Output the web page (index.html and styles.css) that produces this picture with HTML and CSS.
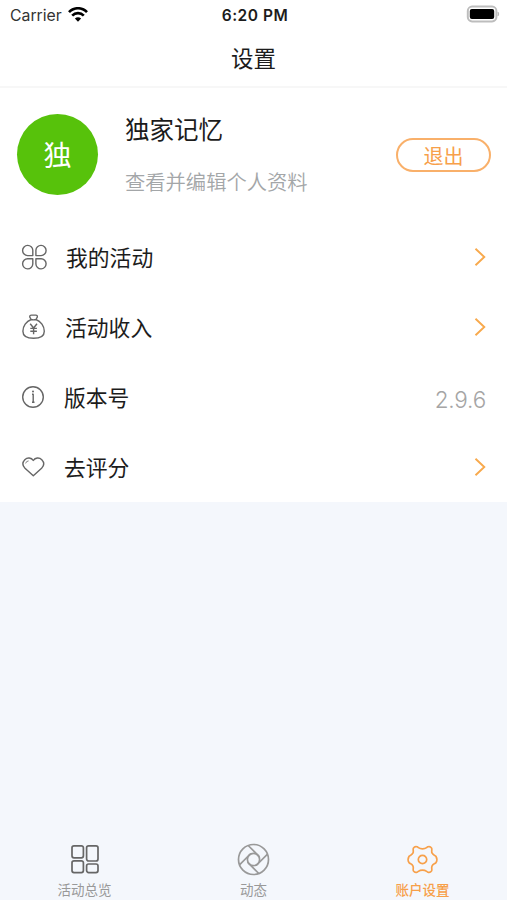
FILE: index.html
```html
<!DOCTYPE html>
<html lang="zh-CN">
<head>
<meta charset="utf-8">
<title>设置</title>
<link rel="stylesheet" href="styles.css">
</head>
<body>
<div class="app">
  <header class="status">
    <div class="carrier">
      <span>Carrier</span>
      <svg class="wifi" width="20" height="15" viewBox="0 0 20 15"><g fill="none" stroke="#000" stroke-width="2.6"><path d="M1 5.2C6-.1 14-.1 19 5.2"/><path d="M4.2 8.7C7.4 5.3 12.6 5.3 15.8 8.7"/></g><path d="M6.9 11.4C8.7 9.7 11.3 9.7 13.1 11.4L10 14.7Z"/></svg>
    </div>
    <span class="time">6:20 PM</span>
    <svg class="battery" width="34" height="18" viewBox="0 0 34 18"><rect x="1.8" y="1.6" width="28.6" height="14.8" rx="4.3" fill="#fff" stroke="#bdbdbd" stroke-width="2"/><rect x="3.8" y="4" width="24.4" height="10" rx="2"/><path d="M32 7q1.6 2 0 4z" fill="#aaa" stroke="#aaa" stroke-width=".5"/></svg>
  </header>
  <h1 class="title">设置</h1>
  <main class="panel">
    <section class="profile">
      <div class="avatar">独</div>
      <div class="who">
        <div class="name">独家记忆</div>
        <div class="hint">查看并编辑个人资料</div>
      </div>
      <button class="logout">退出</button>
    </section>
    <div class="row">
      <svg class="icon" width="28" height="28" viewBox="0 0 28 28"><path d="M12.8 12.6H7.6A5.1 5.1 0 1 1 12.8 7.3ZM15.9 12.6V7.3A5.1 5.1 0 1 1 21.1 12.6ZM12.8 15.7V21A5.1 5.1 0 1 1 7.6 15.7ZM15.9 15.7H21.1A5.1 5.1 0 1 1 15.9 21Z"/></svg>
      <span class="label label-wide">我的活动</span>
      <svg class="arrow" width="12" height="20" viewBox="0 0 12 20"><path d="M1.5 1.7 10.3 10 1.5 18.3"/></svg>
    </div>
    <div class="row">
      <svg class="icon" width="28" height="28" viewBox="0 0 28 28"><path d="M11.2 6.5 9.8 4.2Q9.4 2.1 11.5 2.1H15.8Q17.7 2.1 17.3 4.2L15.9 6.5Q13.5 7.2 11.2 6.5C6.2 8.2 2.9 13.2 2.9 18.2C2.9 23.3 6 25.3 13.6 25.3S24.3 23.3 24.3 18.2C24.3 13.2 20.9 8.2 15.9 6.5"/><path d="M10.2 10.8 13.6 15 17 10.8M13.6 15V21.2M10.3 15.4H16.9M10.3 18.2H16.9"/></svg>
      <span class="label label-mid">活动收入</span>
      <svg class="arrow" width="12" height="20" viewBox="0 0 12 20"><path d="M1.5 1.7 10.3 10 1.5 18.3"/></svg>
    </div>
    <div class="row">
      <svg class="icon" width="28" height="28" viewBox="0 0 28 28"><circle cx="13" cy="14" r="10.3"/><path d="M12 11.3H13.2V19.3M12 19.3H14.5"/><circle class="dot" cx="13" cy="8.6" r="1"/></svg>
      <span class="label">版本号</span>
      <span class="version">2.9.6</span>
    </div>
    <div class="row">
      <svg class="icon" width="28" height="28" viewBox="0 0 28 28"><path d="M13.3 7.5C11.4 4.5 7.3 4.2 4.8 6.7C2.3 9.4 2.6 12.8 5 15.2L13.3 22.8 21.6 15.2C24 12.8 24.3 9.4 21.8 6.7C19.3 4.2 15.2 4.5 13.3 7.5Z"/><path class="thin" d="M5.6 10.4Q6.3 8 8.6 7.9"/></svg>
      <span class="label">去评分</span>
      <svg class="arrow" width="12" height="20" viewBox="0 0 12 20"><path d="M1.5 1.7 10.3 10 1.5 18.3"/></svg>
    </div>
  </main>
  <nav class="tabs">
    <div class="tab tab-home">
      <svg width="34" height="34" viewBox="-17 -17 34 34"><rect x="-13" y="-13.2" width="11.4" height="12" rx="2"/><rect x="1.6" y="-13.2" width="11.4" height="15.2" rx="2"/><rect x="-13" y="1.8" width="11.4" height="11.8" rx="2"/><rect x="1.6" y="5" width="11.4" height="8.6" rx="2"/></svg>
      <span>活动总览</span>
    </div>
    <div class="tab">
      <svg width="34" height="34" viewBox="-16.5 -17.5 34 34"><circle r="15"/><circle r="6.1"/><path d="M-5.3-14 6-2.7M14-5.3 2.7 6M5.3 14-6 2.7M-14 5.3-2.7-6"/></svg>
      <span>动态</span>
    </div>
    <div class="tab tab-active">
      <svg width="34" height="34" viewBox="-16.5 -17.5 34 34"><path d="M-5.4-12.7C-3.8-12-3.4-10.6 0-10.6S3.8-12 5.4-12.7Q7.8-13.4 9.1-11.4C9.9-9.8 8.5-8.3 9.6-6.3S12.2-4.6 13.5-3.2Q15.3 0 13.5 3.2C12.2 4.6 10.7 4.3 9.6 6.3S9.9 9.8 9.1 11.4Q7.8 13.4 5.4 12.7C3.8 12 3.4 10.6 0 10.6S-3.8 12-5.4 12.7Q-7.8 13.4-9.1 11.4C-9.9 9.8-8.5 8.3-9.6 6.3S-12.2 4.6-13.5 3.2Q-15.3 0-13.5-3.2C-12.2-4.6-10.7-4.3-9.6-6.3S-9.9-9.8-9.1-11.4Q-7.8-13.4-5.4-12.7Z"/><circle r="4.2"/></svg>
      <span>账户设置</span>
    </div>
  </nav>
</div>
</body>
</html>
```

FILE: styles.css
```css
* { box-sizing: border-box; }

body {
  margin: 0;
  background: #f4f7fc;
  color: #1c1c1c;
  font-family: "Noto Sans CJK SC", sans-serif;
}

.app {
  display: flex;
  flex-direction: column;
  height: 900px;
}

.status {
  display: grid;
  grid-template-columns: 1fr auto 1fr;
  align-items: center;
  height: 30px;
  padding: 0 7px 0 10px;
  background: #fff;
  font-family: Inter, sans-serif;
  font-size: 16px;
}

.carrier {
  display: flex;
  align-items: center;
  gap: 6px;
  color: #333;
  font-size: 15.8px;
}

.wifi { margin-top: -2px; }

.time {
  font-weight: 600;
  font-size: 15.5px;
  letter-spacing: 0.5px;
}

.battery {
  justify-self: end;
  margin-top: -2px;
}

.title {
  height: 58px;
  margin: 0;
  border-bottom: 2px solid #f7f7f7;
  background: #fff;
  font-size: 22.5px;
  font-weight: 400;
  line-height: 54px;
  text-align: center;
}

.panel { background: #fff; }

.profile {
  display: flex;
  align-items: center;
  height: 134px;
  padding: 0 16px 2px 17px;
}

.avatar {
  width: 81px;
  height: 81px;
  border-radius: 50%;
  background: #57c20b;
  color: #fff;
  font-size: 28px;
  line-height: 80px;
  text-align: center;
}

.who {
  flex: 1;
  margin-left: 27px;
}

.name {
  margin-top: -2px;
  font-size: 24.5px;
  line-height: 36px;
}

.hint {
  margin-top: 19px;
  color: #a3a6a8;
  font-size: 20.3px;
  font-weight: 350;
  line-height: 30px;
}

.logout {
  width: 95px;
  height: 34px;
  margin-top: 2px;
  padding: 0;
  border: 2px solid #f9b06a;
  border-radius: 17px;
  background: #fff;
  color: #f7a04a;
  font: 20px/29px "Noto Sans CJK SC", sans-serif;
}

.row {
  display: flex;
  align-items: center;
  height: 70px;
  padding: 0 21px 0 20px;
}

.icon {
  fill: none;
  stroke: #666;
  stroke-width: 1.4;
  stroke-linejoin: round;
}

.icon .dot {
  fill: #666;
  stroke: none;
}

.icon .thin { stroke-width: 0.8; }

.label {
  flex: 1;
  margin-left: 16px;
  font-size: 21.8px;
  line-height: 32px;
}

.label-mid { margin-left: 17px; }
.label-wide { margin-left: 18px; }

.arrow {
  fill: none;
  stroke: #f8a94c;
  stroke-width: 1.9;
}

.version {
  margin: 5px 0 0;
  color: #a5a5a5;
  font-family: Inter, sans-serif;
  font-size: 22.5px;
  font-weight: 300;
  letter-spacing: -0.2px;
}

.tabs {
  display: flex;
  height: 58px;
  margin-top: auto;
}

.tab {
  display: flex;
  flex: 1;
  flex-direction: column;
  align-items: center;
  color: #999;
  font-size: 13.5px;
  line-height: 20px;
}

.tab svg {
  flex: none;
  margin-bottom: 3px;
  fill: none;
  stroke: #999;
  stroke-width: 1.7;
}

.tab-home svg { stroke: #666; }

.tab-active { color: #f7a04a; font-weight: 500; }
.tab-active svg { stroke: #f7a04a; }
```
